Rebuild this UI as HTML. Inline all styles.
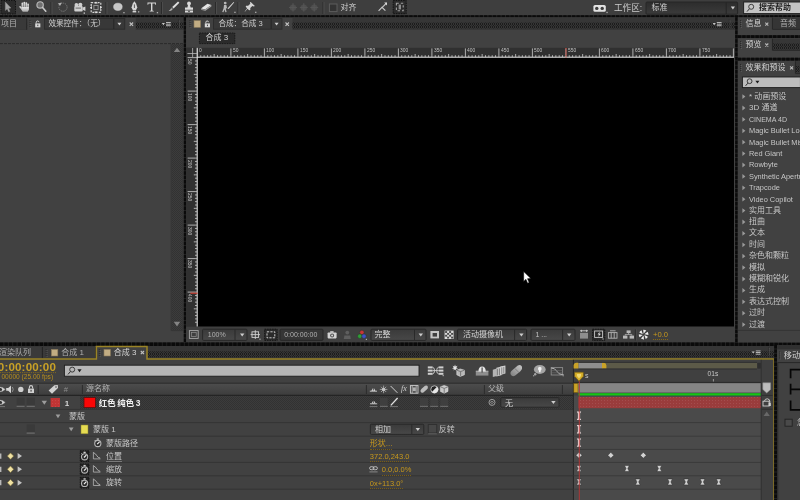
<!DOCTYPE html>
<html><head><meta charset="utf-8"><title>After Effects</title>
<style>
html,body{margin:0;padding:0;background:#424242;}
body{width:800px;height:500px;overflow:hidden;position:relative;font-family:"Liberation Sans","Noto Sans CJK SC",sans-serif;}
#ui{position:absolute;left:0;top:0;width:800px;height:500px;overflow:hidden;filter:blur(.4px);}
#tx{position:absolute;left:0;top:0;width:800px;height:500px;will-change:transform;opacity:.999;}
#bg{position:absolute;left:0;top:0;display:block;}
.t{position:absolute;white-space:nowrap;line-height:1;font-family:"Liberation Sans","Noto Sans CJK SC",sans-serif;}
.b{font-weight:bold;}
.u{border-bottom:1px dotted #7a5e16;padding-bottom:.8px;}
.ul{border-bottom:1px solid #7a7a7a;padding-bottom:0;}
</style></head><body>
<div id="ui">
<svg id="bg" width="800" height="500" viewBox="0 0 800 500"><defs><pattern id="rdots" width="3" height="3" patternUnits="userSpaceOnUse"><rect x="1" y="1" width="1" height="1" fill="#ffffff" fill-opacity="0.09"/></pattern></defs>
<pattern id="dots" width="4" height="3" patternUnits="userSpaceOnUse"><rect width="4" height="3" fill="#353535"/><path d="M0 0h1v1h-1zM2 0h1v1h-1zM1 1h1v1h-1zM0 2h1v1h-1zM2 2h1v1h-1z" fill="#1c1c1c"/><path d="M3 1h1v1h-1z" fill="#2a2a2a"/></pattern>
<pattern id="dots2" width="2" height="2" patternUnits="userSpaceOnUse"><rect width="2" height="2" fill="#3c3c3c"/><rect width="1" height="1" fill="#323232"/><rect x="1" y="1" width="1" height="1" fill="#323232"/></pattern>
<rect x="0" y="0" width="800" height="500" fill="#414141"/>
<rect x="0" y="0" width="800" height="16" fill="#3e3e3e"/>
<path d="M51 2L51 14" stroke="#2a2a2a" stroke-width="1" fill="none"/>
<path d="M52 2L52 14" stroke="#4c4c4c" stroke-width="1" fill="none"/>
<path d="M106 2L106 14" stroke="#2a2a2a" stroke-width="1" fill="none"/>
<path d="M107 2L107 14" stroke="#4c4c4c" stroke-width="1" fill="none"/>
<path d="M161.5 2L161.5 14" stroke="#2a2a2a" stroke-width="1" fill="none"/>
<path d="M162.5 2L162.5 14" stroke="#4c4c4c" stroke-width="1" fill="none"/>
<path d="M215.5 2L215.5 14" stroke="#2a2a2a" stroke-width="1" fill="none"/>
<path d="M216.5 2L216.5 14" stroke="#4c4c4c" stroke-width="1" fill="none"/>
<path d="M238 2L238 14" stroke="#2a2a2a" stroke-width="1" fill="none"/>
<path d="M239 2L239 14" stroke="#4c4c4c" stroke-width="1" fill="none"/>
<path d="M323 2L323 14" stroke="#2a2a2a" stroke-width="1" fill="none"/>
<path d="M324 2L324 14" stroke="#4c4c4c" stroke-width="1" fill="none"/>
<rect x="1" y="0.5" width="14.5" height="13.5" fill="#2b2b2b" stroke="#141414" stroke-width="1" stroke-dasharray="1.5 1"/>
<path d="M5.3 2L5.3 10.6L7.2 8.9L8.7 11.9L10 11.3L8.6 8.4L11 8Z" fill="#a2a2a2" stroke="#8a8a8a" stroke-width="0.4"/>
<linearGradient id="hg" x1="0" y1="0" x2="0" y2="1"><stop offset="0" stop-color="#e6e6e6"/><stop offset="1" stop-color="#a8a8a8"/></linearGradient>
<g transform="translate(19 1.6)" fill="url(#hg)">
<rect x="2.5" y="1" width="1.7" height="5.6" rx="0.85"/><rect x="4.5" y="0.1" width="1.7" height="6" rx="0.85"/><rect x="6.5" y="0.6" width="1.7" height="6" rx="0.85"/><rect x="8.4" y="2" width="1.5" height="5" rx="0.75"/>
<path d="M2.5 5.4H9.9V7.6Q9.6 9.4 8.6 10.2H3.8Q2.8 9.2 2.5 7.8Z"/>
<path d="M2.9 8.6L0.4 5.6Q0 4.6 0.9 4.4Q1.6 4.4 2.1 5.2L3 6.4Z"/>
</g>
<circle cx="40.1" cy="4.9" r="3.2" fill="#707070" stroke="#bcbcbc" stroke-width="1.1"/>
<path d="M42.6 7.4L45.8 11.2" stroke="#c8c8c8" stroke-width="1.6" fill="none" stroke-linecap="round"/>
<circle cx="63" cy="7.2" r="4.1" fill="none" stroke="#787878" stroke-width="1" stroke-dasharray="1.4 0.9"/>
<path d="M57.8 3.4L61.8 2.6L60.2 5.8Z" fill="#b4b4b4"/>
<g transform="translate(74 3)">
<rect x="0.3" y="3" width="8.4" height="5.4" fill="#cfcfcf" rx="1"/>
<circle cx="2.4" cy="2" r="1.9" fill="#cfcfcf"/><circle cx="6.3" cy="1.8" r="2.1" fill="#cfcfcf"/>
<path d="M8.7 4.6L11.4 3.4L11.4 8L8.7 6.8Z" fill="#cfcfcf"/>
<rect x="1.6" y="4.6" width="5.4" height="1" fill="#6a6a6a"/>
<rect x="9.6" y="9.4" width="1.4" height="1.4" fill="#bbbbbb"/>
</g>
<g transform="translate(90 1.5)">
<rect x="1.2" y="1.2" width="9.6" height="9.6" fill="none" stroke="#d4d4d4" stroke-width="1.2" stroke-dasharray="2 1.2"/>
<rect x="3.9" y="3.9" width="4.2" height="4.2" fill="#3a3a3a" stroke="#9a9a9a" stroke-width="0.9"/>
<path d="M6 0L7.6 2L4.4 2ZM6 12L7.6 10L4.4 10ZM0 6L2 4.4L2 7.6ZM12 6L10 4.4L10 7.6Z" fill="#e0e0e0"/>
</g>
<ellipse cx="117.9" cy="6.8" rx="4.3" ry="3.6" fill="#c6c6c6" stroke="#dedede" stroke-width="0.5"/>
<rect x="123.3" y="12" width="1.3" height="1.3" fill="#b0b0b0"/>
<g transform="translate(130.4 1)">
<path d="M4 0.2L5.6 2.6L6.9 6.6L5.4 9.4L2.6 9.4L1.1 6.6L2.4 2.6Z" fill="#d6d6d6"/>
<path d="M4 3.4L4 7" fill="none" stroke="#4a4a4a" stroke-width="0.9"/>
<rect x="2.2" y="10" width="3.6" height="1.4" fill="#d6d6d6"/>
<rect x="7.6" y="10.2" width="1.3" height="1.3" fill="#b0b0b0"/>
</g>
<g transform="translate(0.9 0)">
<path d="M146.6 2.6L155 2.6L155 4.8L154.3 4.8L154 3.5L151.5 3.5L151.5 10.6L152.9 10.9L152.9 11.5L148.7 11.5L148.7 10.9L150.1 10.6L150.1 3.5L147.6 3.5L147.3 4.8L146.6 4.8Z" fill="#d8d8d8"/>
</g>
<rect x="156.8" y="12" width="1.3" height="1.3" fill="#b0b0b0"/>
<path d="M178 1.4L179.4 2.8L173.6 8.4L172.2 7Z" fill="#e0e0e0"/>
<path d="M172.2 7L173.6 8.4L172.6 9.4L171.2 8Z" fill="#707070"/>
<path d="M171.2 8L172.6 9.4Q170.8 11.4 168.6 11Q170.2 10 171.2 8Z" fill="#b0b0b0"/>
<g transform="translate(185 1.5)">
<circle cx="4" cy="1.9" r="1.9" fill="#dadada"/>
<path d="M3 3.4L5 3.4L5.6 6L8 6L8 8.2L0 8.2L0 6L2.4 6Z" fill="#dadada"/>
<rect x="0" y="9" width="8" height="2" fill="#dadada"/>
<path d="M2.6 9.3L5.4 9.3L4 10.8Z" fill="#3a3a3a"/>
</g>
<path d="M201 8.4L207.4 3.8L211.4 5L205 9.6Z" fill="#e4e4e4"/>
<path d="M201 8.4L205 9.6V11L201 9.8Z" fill="#8a8a8a"/>
<path d="M205 9.6L211.4 5V6.4L205 11Z" fill="#a4a4a4"/>
<g transform="translate(221 1.5)">
<circle cx="4.2" cy="1.6" r="1.4" fill="#b8b8b8"/>
<path d="M3 3.4L5.4 3.4L6 6.4L4.8 7.2L5.6 10.6L4.4 10.8L3.6 8L2.4 10.8L1.2 10.4L2.6 6.8Z" fill="#b8b8b8"/>
<path d="M12.6 0.4L13.2 1L7.8 7.2L6.6 7.6L6.9 6.4Z" fill="#d8d8d8"/>
<rect x="13.3" y="10.2" width="1.3" height="1.3" fill="#b0b0b0"/>
</g>
<g transform="translate(244.5 1.5)">
<path d="M6.2 0.4L10.4 4.6L9.2 5L7.8 4.4L5.8 6.6L5.8 8.6L4.6 8.8L3 7.2L0.4 10.2L0.2 10L2.6 6.8L1.2 5.2L1.6 4.2L3.6 4.2L5.8 2.2L5.4 0.9Z" fill="#d4d4d4"/>
<rect x="10.6" y="10.2" width="1.3" height="1.3" fill="#b0b0b0"/>
</g>
<circle cx="293" cy="7.6" r="3.2" fill="#4e4e4e"/>
<path d="M293 3.2L293 11.6M289 7.4L297 7.4" fill="none" stroke="#585858" stroke-width="0.9"/>
<circle cx="303.8" cy="7.6" r="3.2" fill="#4e4e4e"/>
<path d="M303.8 3.2L303.8 11.6M299.8 7.4L307.8 7.4" fill="none" stroke="#585858" stroke-width="0.9"/>
<circle cx="314.2" cy="7.6" r="3.2" fill="#4e4e4e"/>
<path d="M314.2 3.2L314.2 11.6M310.2 7.4L318.2 7.4" fill="none" stroke="#585858" stroke-width="0.9"/>
<rect x="329.4" y="4" width="7.6" height="7.6" fill="#333333" stroke="#5c5c5c" stroke-width="1"/>
<path d="M378.6 10.8L382 7.4L385.4 10.6" fill="none" stroke="#c8c8c8" stroke-width="1.2"/>
<path d="M382 7.6L386.6 3" fill="none" stroke="#c8c8c8" stroke-width="1.1"/>
<path d="M384.2 2.6L387 2.6L387 5.4Z" fill="#d8d8d8"/>
<rect x="393.2" y="0.5" width="13" height="13.2" fill="#2c2c2c" stroke="#121212" stroke-width="1" stroke-dasharray="1.5 1"/>
<rect x="396.4" y="3.2" width="6.8" height="7.6" fill="none" stroke="#a0a0a0" stroke-width="1.1" stroke-dasharray="2.4 2"/>
<rect x="398.6" y="4.6" width="2.4" height="4.8" fill="#8c8c8c"/>
<rect x="593.4" y="5" width="12.4" height="6.8" fill="#e2e2e2" rx="1.6"/>
<circle cx="596.8" cy="8.4" r="1.7" fill="#3c3c3c"/><circle cx="602.2" cy="8.4" r="1.7" fill="#3c3c3c"/>
<rect x="606.4" y="11.8" width="1.3" height="1.3" fill="#b0b0b0"/>
<linearGradient id="dd" x1="0" y1="0" x2="0" y2="1"><stop offset="0" stop-color="#2c2c2c"/><stop offset="1" stop-color="#3b3b3b"/></linearGradient>
<rect x="646" y="2" width="91.6" height="12.2" fill="url(#dd)" stroke="#262626" stroke-width="1" rx="1"/>
<path d="M726.2 2.4L726.2 14" stroke="#252525" stroke-width="1" fill="none"/>
<path d="M730.8 6.6L735 6.6L732.9 9.6Z" fill="#d0d0d0"/>
<rect x="743.6" y="2" width="57" height="11.6" fill="#c4c4c4" stroke="#202020" stroke-width="1"/>
<circle cx="751.2" cy="6.8" r="2.5" fill="none" stroke="#333" stroke-width="0.9"/>
<path d="M749.4 8.8L747 11.6" stroke="#333" stroke-width="1" fill="none"/>
<rect x="0" y="15.3" width="800" height="2" fill="#202020"/>
<path d="M0 16.3L800 16.3" stroke="#0a0a0a" stroke-width="2" fill="none" stroke-dasharray="3.4 1"/>
<rect x="0" y="17.3" width="183.6" height="12.7" fill="#363636"/>
<rect x="0" y="22.5" width="183.6" height="6" fill="url(#dots)"/>
<rect x="0" y="30" width="183.6" height="312.4" fill="#414141"/>
<rect x="0" y="18.4" width="26.4" height="11.4" fill="#393939"/>
<path d="M26.6 18.4L26.6 29.8" stroke="#282828" stroke-width="1" fill="none"/>
<rect x="27.4" y="18" width="108.4" height="12.2" fill="#414141"/>
<rect x="29.4" y="20" width="1" height="1" fill="#2a2a2a"/>
<rect x="30.4" y="21" width="1" height="1" fill="#555555"/>
<rect x="29.4" y="22" width="1" height="1" fill="#2a2a2a"/>
<rect x="30.4" y="23" width="1" height="1" fill="#555555"/>
<rect x="29.4" y="24" width="1" height="1" fill="#2a2a2a"/>
<rect x="30.4" y="25" width="1" height="1" fill="#555555"/>
<rect x="29.4" y="26" width="1" height="1" fill="#2a2a2a"/>
<rect x="30.4" y="27" width="1" height="1" fill="#555555"/>
<g transform="translate(35.2 20.8) scale(0.86)">
<rect x="0" y="3" width="6" height="4.6" fill="#d8d8d8"/>
<path d="M1.2 3L1.2 1.8Q1.2 0.2 2.8 0.2Q4.2 0.2 4.4 1.6" fill="none" stroke="#d8d8d8" stroke-width="1.1"/>
<rect x="2.5" y="4.4" width="1.1" height="1.8" fill="#3a3a3a"/>
</g>
<rect x="44.4" y="18.6" width="80.4" height="10.6" fill="#383838" stroke="#2a2a2a" stroke-width="0.8"/>
<path d="M113.8 19L113.8 29" stroke="#262626" stroke-width="1" fill="none"/>
<path d="M117.4 22.8L121.4 22.8L119.4 25.6Z" fill="#cfcfcf"/>
<path d="M129.7 22.5L133.1 25.9M133.1 22.5L129.7 25.9" fill="none" stroke="#c0c0c0" stroke-width="1.1"/>
<path d="M161.8 23L165 23L163.4 25.2Z" fill="#c4c4c4"/>
<rect x="166" y="22.1" width="4.8" height="0.9" fill="#c4c4c4"/>
<rect x="166" y="23.7" width="4.8" height="0.9" fill="#c4c4c4"/>
<rect x="166" y="25.3" width="4.8" height="0.9" fill="#c4c4c4"/>
<rect x="178" y="19.6" width="1" height="1" fill="#2a2a2a"/>
<rect x="179" y="20.6" width="1" height="1" fill="#555555"/>
<rect x="178" y="21.6" width="1" height="1" fill="#2a2a2a"/>
<rect x="179" y="22.6" width="1" height="1" fill="#555555"/>
<rect x="178" y="23.6" width="1" height="1" fill="#2a2a2a"/>
<rect x="179" y="24.6" width="1" height="1" fill="#555555"/>
<rect x="178" y="25.6" width="1" height="1" fill="#2a2a2a"/>
<rect x="179" y="26.6" width="1" height="1" fill="#555555"/>
<path d="M0 43.6L183 43.6" stroke="#2b2b2b" stroke-width="1" fill="none" stroke-dasharray="3 1"/>
<rect x="171.2" y="44" width="11.6" height="286.6" fill="url(#dots2)"/>
<path d="M171.2 44L171.2 330.6" stroke="#363636" stroke-width="1" fill="none"/>
<path d="M182.8 44L182.8 330.6" stroke="#363636" stroke-width="1" fill="none"/>
<path d="M171.2 330.6L182.8 330.6" stroke="#363636" stroke-width="1" fill="none"/>
<path d="M173.8 52L180.2 52L177 47.8Z" fill="#848484"/>
<path d="M173.8 321.8L180.2 321.8L177 326.4Z" fill="#848484"/>
<rect x="183.8" y="17.3" width="2.3" height="325" fill="#202020"/>
<path d="M184.95 17.3L184.95 342.3" stroke="#0a0a0a" stroke-width="2.3" fill="none" stroke-dasharray="3.4 1"/>
<rect x="186.1" y="17.3" width="548.9" height="12.7" fill="#363636"/>
<rect x="186.1" y="22.5" width="548.9" height="6" fill="url(#dots)"/>
<rect x="186.1" y="18" width="106.4" height="12.2" fill="#414141"/>
<rect x="189.4" y="20" width="1" height="1" fill="#2a2a2a"/>
<rect x="190.4" y="21" width="1" height="1" fill="#555555"/>
<rect x="189.4" y="22" width="1" height="1" fill="#2a2a2a"/>
<rect x="190.4" y="23" width="1" height="1" fill="#555555"/>
<rect x="189.4" y="24" width="1" height="1" fill="#2a2a2a"/>
<rect x="190.4" y="25" width="1" height="1" fill="#555555"/>
<rect x="189.4" y="26" width="1" height="1" fill="#2a2a2a"/>
<rect x="190.4" y="27" width="1" height="1" fill="#555555"/>
<rect x="194" y="20.6" width="6.6" height="6.8" fill="#c2ad83" stroke="#8a7a5a" stroke-width="0.6"/>
<g transform="translate(204.8 20.8) scale(0.86)">
<rect x="0" y="3" width="6" height="4.6" fill="#d8d8d8"/>
<path d="M1.2 3L1.2 1.8Q1.2 0.2 2.8 0.2Q4.2 0.2 4.4 1.6" fill="none" stroke="#d8d8d8" stroke-width="1.1"/>
<rect x="2.5" y="4.4" width="1.1" height="1.8" fill="#3a3a3a"/>
</g>
<rect x="213.4" y="18.6" width="68.6" height="10.6" fill="#383838" stroke="#2a2a2a" stroke-width="0.8"/>
<path d="M271.2 19L271.2 29" stroke="#262626" stroke-width="1" fill="none"/>
<path d="M274.6 22.8L278.6 22.8L276.6 25.6Z" fill="#cfcfcf"/>
<path d="M285.5 22.5L288.9 25.9M288.9 22.5L285.5 25.9" fill="none" stroke="#c0c0c0" stroke-width="1.1"/>
<path d="M712.6 23L715.8 23L714.2 25.2Z" fill="#c4c4c4"/>
<rect x="716.8" y="22.1" width="4.8" height="0.9" fill="#c4c4c4"/>
<rect x="716.8" y="23.7" width="4.8" height="0.9" fill="#c4c4c4"/>
<rect x="716.8" y="25.3" width="4.8" height="0.9" fill="#c4c4c4"/>
<rect x="728.6" y="19.6" width="1" height="1" fill="#2a2a2a"/>
<rect x="729.6" y="20.6" width="1" height="1" fill="#555555"/>
<rect x="728.6" y="21.6" width="1" height="1" fill="#2a2a2a"/>
<rect x="729.6" y="22.6" width="1" height="1" fill="#555555"/>
<rect x="728.6" y="23.6" width="1" height="1" fill="#2a2a2a"/>
<rect x="729.6" y="24.6" width="1" height="1" fill="#555555"/>
<rect x="728.6" y="25.6" width="1" height="1" fill="#2a2a2a"/>
<rect x="729.6" y="26.6" width="1" height="1" fill="#555555"/>
<rect x="186.1" y="30" width="548.9" height="18" fill="#414141"/>
<rect x="199.4" y="33" width="35.4" height="10.6" fill="#2b2b2b" stroke="#161616" stroke-width="0.9" stroke-dasharray="1.5 1"/>
<rect x="186.1" y="47.8" width="547.9" height="9.8" fill="#303030"/>
<rect x="186.1" y="47.8" width="11.4" height="279" fill="#303030"/>
<rect x="197.6" y="57.6" width="536.4" height="269" fill="#000000"/>
<path d="M197 57.2L734 57.2" stroke="#e6e6e6" stroke-width="1" fill="none"/>
<path d="M197.2 47.8L197.2 326.6" stroke="#e6e6e6" stroke-width="1" fill="none"/>
<path d="M187.4 53.5L197 53.5" stroke="#b8b8b8" stroke-width="0.8" fill="none"/>
<path d="M192.6 48L192.6 57" stroke="#b8b8b8" stroke-width="0.8" fill="none"/>
<path d="M197.4 48.4V57M200.75 55.2V57M204.1 55.2V57M207.45 55.2V57M210.8 55.2V57M214.15 54V57M217.5 55.2V57M220.85 55.2V57M224.2 55.2V57M227.55 55.2V57M230.9 48.4V57M234.25 55.2V57M237.6 55.2V57M240.95 55.2V57M244.3 55.2V57M247.65 54V57M251 55.2V57M254.35 55.2V57M257.7 55.2V57M261.05 55.2V57M264.4 48.4V57M267.75 55.2V57M271.1 55.2V57M274.45 55.2V57M277.8 55.2V57M281.15 54V57M284.5 55.2V57M287.85 55.2V57M291.2 55.2V57M294.55 55.2V57M297.9 48.4V57M301.25 55.2V57M304.6 55.2V57M307.95 55.2V57M311.3 55.2V57M314.65 54V57M318 55.2V57M321.35 55.2V57M324.7 55.2V57M328.05 55.2V57M331.4 48.4V57M334.75 55.2V57M338.1 55.2V57M341.45 55.2V57M344.8 55.2V57M348.15 54V57M351.5 55.2V57M354.85 55.2V57M358.2 55.2V57M361.55 55.2V57M364.9 48.4V57M368.25 55.2V57M371.6 55.2V57M374.95 55.2V57M378.3 55.2V57M381.65 54V57M385 55.2V57M388.35 55.2V57M391.7 55.2V57M395.05 55.2V57M398.4 48.4V57M401.75 55.2V57M405.1 55.2V57M408.45 55.2V57M411.8 55.2V57M415.15 54V57M418.5 55.2V57M421.85 55.2V57M425.2 55.2V57M428.55 55.2V57M431.9 48.4V57M435.25 55.2V57M438.6 55.2V57M441.95 55.2V57M445.3 55.2V57M448.65 54V57M452 55.2V57M455.35 55.2V57M458.7 55.2V57M462.05 55.2V57M465.4 48.4V57M468.75 55.2V57M472.1 55.2V57M475.45 55.2V57M478.8 55.2V57M482.15 54V57M485.5 55.2V57M488.85 55.2V57M492.2 55.2V57M495.55 55.2V57M498.9 48.4V57M502.25 55.2V57M505.6 55.2V57M508.95 55.2V57M512.3 55.2V57M515.65 54V57M519 55.2V57M522.35 55.2V57M525.7 55.2V57M529.05 55.2V57M532.4 48.4V57M535.75 55.2V57M539.1 55.2V57M542.45 55.2V57M545.8 55.2V57M549.15 54V57M552.5 55.2V57M555.85 55.2V57M559.2 55.2V57M562.55 55.2V57M565.9 48.4V57M569.25 55.2V57M572.6 55.2V57M575.95 55.2V57M579.3 55.2V57M582.65 54V57M586 55.2V57M589.35 55.2V57M592.7 55.2V57M596.05 55.2V57M599.4 48.4V57M602.75 55.2V57M606.1 55.2V57M609.45 55.2V57M612.8 55.2V57M616.15 54V57M619.5 55.2V57M622.85 55.2V57M626.2 55.2V57M629.55 55.2V57M632.9 48.4V57M636.25 55.2V57M639.6 55.2V57M642.95 55.2V57M646.3 55.2V57M649.65 54V57M653 55.2V57M656.35 55.2V57M659.7 55.2V57M663.05 55.2V57M666.4 48.4V57M669.75 55.2V57M673.1 55.2V57M676.45 55.2V57M679.8 55.2V57M683.15 54V57M686.5 55.2V57M689.85 55.2V57M693.2 55.2V57M696.55 55.2V57M699.9 48.4V57M703.25 55.2V57M706.6 55.2V57M709.95 55.2V57M713.3 55.2V57M716.65 54V57M720 55.2V57M723.35 55.2V57M726.7 55.2V57M730.05 55.2V57M733.4 48.4V57" fill="none" stroke="#cfcfcf" stroke-width="0.8"/>
<path d="M566 48L566 57.6" stroke="#e23a2a" stroke-width="1" fill="none" stroke-dasharray="1.4 0.8"/>
<path d="M187.6 57.6H197M195 60.95H197M195 64.3H197M195 67.65H197M195 71H197M193.8 74.35H197M195 77.7H197M195 81.05H197M195 84.4H197M195 87.75H197M187.6 91.1H197M195 94.45H197M195 97.8H197M195 101.15H197M195 104.5H197M193.8 107.85H197M195 111.2H197M195 114.55H197M195 117.9H197M195 121.25H197M187.6 124.6H197M195 127.95H197M195 131.3H197M195 134.65H197M195 138H197M193.8 141.35H197M195 144.7H197M195 148.05H197M195 151.4H197M195 154.75H197M187.6 158.1H197M195 161.45H197M195 164.8H197M195 168.15H197M195 171.5H197M193.8 174.85H197M195 178.2H197M195 181.55H197M195 184.9H197M195 188.25H197M187.6 191.6H197M195 194.95H197M195 198.3H197M195 201.65H197M195 205H197M193.8 208.35H197M195 211.7H197M195 215.05H197M195 218.4H197M195 221.75H197M187.6 225.1H197M195 228.45H197M195 231.8H197M195 235.15H197M195 238.5H197M193.8 241.85H197M195 245.2H197M195 248.55H197M195 251.9H197M195 255.25H197M187.6 258.6H197M195 261.95H197M195 265.3H197M195 268.65H197M195 272H197M193.8 275.35H197M195 278.7H197M195 282.05H197M195 285.4H197M195 288.75H197M187.6 292.1H197M195 295.45H197M195 298.8H197M195 302.15H197M195 305.5H197M193.8 308.85H197M195 312.2H197M195 315.55H197M195 318.9H197M195 322.25H197" fill="none" stroke="#cfcfcf" stroke-width="0.8"/>
<path d="M190.4 293.2L197.6 293.2" stroke="#e23a2a" stroke-width="1" fill="none"/>
<rect x="186.1" y="326.8" width="548.9" height="15.6" fill="#3f3f3f"/>
<linearGradient id="dd2" x1="0" y1="0" x2="0" y2="1"><stop offset="0" stop-color="#3a3a3a"/><stop offset="1" stop-color="#484848"/></linearGradient>
<rect x="189.4" y="330.6" width="8.8" height="7.8" fill="none" stroke="#a8a8a8" stroke-width="0.9"/>
<rect x="191.4" y="332.6" width="4.8" height="3.8" fill="none" stroke="#909090" stroke-width="0.7"/>
<rect x="202.6" y="329.2" width="44.4" height="11.2" fill="url(#dd2)" stroke="#262626" stroke-width="0.9" rx="1"/>
<path d="M235 329.6L235 340" stroke="#272727" stroke-width="0.9" fill="none"/>
<path d="M240 333.5L244.4 333.5L242.2 336.5Z" fill="#cdcdcd"/>
<rect x="252" y="331.8" width="6.6" height="5.6" fill="none" stroke="#d0d0d0" stroke-width="0.9"/>
<path d="M255.3 330.2V339M250.6 334.6H260" fill="none" stroke="#d0d0d0" stroke-width="0.9"/>
<rect x="259.4" y="338.6" width="1.2" height="1.2" fill="#b0b0b0"/>
<rect x="264.6" y="329.2" width="12.6" height="11.2" fill="#2a2a2a" stroke="#141414" stroke-width="0.9" stroke-dasharray="1.5 1"/>
<rect x="267" y="331.8" width="7.8" height="6" fill="none" stroke="#c8c8c8" stroke-width="1" stroke-dasharray="2.2 1.2"/>
<rect x="280" y="329.2" width="43" height="11.2" fill="#363636" stroke="#262626" stroke-width="0.9" rx="1"/>
<g transform="translate(327.6 330.8)">
<rect x="0" y="1.6" width="9" height="6" fill="#d2d2d2" rx="0.8"/>
<rect x="2.6" y="0.4" width="3.4" height="1.6" fill="#d2d2d2"/>
<circle cx="4.5" cy="4.6" r="2" fill="#505050"/><circle cx="4.5" cy="4.6" r="1" fill="#d2d2d2"/>
</g>
<circle cx="347.3" cy="332.6" r="1.9" fill="#5e5e5e"/>
<path d="M343.8 339L344.4 335.6L350.2 335.6L350.8 339Z" fill="#5e5e5e"/>
<g stroke="#2a2a2a" stroke-width="0.4"><circle cx="361.9" cy="332.4" r="2.2" fill="#c63636"/><circle cx="359.8" cy="336.2" r="2.2" fill="#2f9e36"/><circle cx="364" cy="336.2" r="2.2" fill="#3f52c4"/></g>
<rect x="365.8" y="338.8" width="1.2" height="1.2" fill="#b0b0b0"/>
<rect x="371" y="329.2" width="55" height="11.2" fill="url(#dd2)" stroke="#262626" stroke-width="0.9" rx="1"/>
<path d="M414.5 329.6L414.5 340" stroke="#272727" stroke-width="0.9" fill="none"/>
<path d="M418.6 333.5L423 333.5L420.8 336.5Z" fill="#cdcdcd"/>
<rect x="430.4" y="331" width="8.6" height="7.4" fill="#c4c4c4"/>
<rect x="432.6" y="333" width="4.4" height="3.6" fill="#3e3e3e"/>
<rect x="444.6" y="330.6" width="9" height="8.4" fill="#d8d8d8"/>
<rect x="445.1" y="331.1" width="2" height="1.85" fill="#4a4a4a"/>
<rect x="445.1" y="334.8" width="2" height="1.85" fill="#4a4a4a"/>
<rect x="447.1" y="332.95" width="2" height="1.85" fill="#4a4a4a"/>
<rect x="447.1" y="336.65" width="2" height="1.85" fill="#4a4a4a"/>
<rect x="449.1" y="331.1" width="2" height="1.85" fill="#4a4a4a"/>
<rect x="449.1" y="334.8" width="2" height="1.85" fill="#4a4a4a"/>
<rect x="451.1" y="332.95" width="2" height="1.85" fill="#4a4a4a"/>
<rect x="451.1" y="336.65" width="2" height="1.85" fill="#4a4a4a"/>
<rect x="457.6" y="329.2" width="69" height="11.2" fill="url(#dd2)" stroke="#262626" stroke-width="0.9" rx="1"/>
<path d="M514.6 329.6L514.6 340" stroke="#272727" stroke-width="0.9" fill="none"/>
<path d="M519.2 333.5L523.6 333.5L521.4 336.5Z" fill="#cdcdcd"/>
<rect x="531" y="329.2" width="44" height="11.2" fill="url(#dd2)" stroke="#262626" stroke-width="0.9" rx="1"/>
<path d="M562.6 329.6L562.6 340" stroke="#272727" stroke-width="0.9" fill="none"/>
<path d="M567 333.5L571.4 333.5L569.2 336.5Z" fill="#cdcdcd"/>
<rect x="580" y="332.8" width="8" height="5.8" fill="#8e8e8e"/>
<path d="M580 330.8H588" fill="none" stroke="#d0d0d0" stroke-width="0.9"/>
<path d="M581.4 329.8V332M586.6 329.8V332" fill="none" stroke="#d0d0d0" stroke-width="0.8"/>
<rect x="592.6" y="329.2" width="12.2" height="11.2" fill="#2a2a2a" stroke="#141414" stroke-width="0.9" stroke-dasharray="1.5 1"/>
<rect x="594.6" y="331" width="8" height="6.4" fill="none" stroke="#c8c8c8" stroke-width="0.9"/>
<path d="M599.6 331.8L597.6 334.6L599.2 334.6L598 337L601 333.8L599.4 333.8Z" fill="#e8e8e8"/>
<rect x="602.4" y="338.4" width="1.2" height="1.2" fill="#b0b0b0"/>
<rect x="608.4" y="332.6" width="8.6" height="5.6" fill="none" stroke="#b4b4b4" stroke-width="0.9"/>
<path d="M611.2 332.6V338.2M614.2 332.6V338.2M610 330.8H615.6" fill="none" stroke="#b4b4b4" stroke-width="0.9"/>
<rect x="626.6" y="330.4" width="4" height="2.6" fill="#b8b8b8"/>
<rect x="623" y="335.6" width="4.4" height="3" fill="#b8b8b8"/>
<rect x="629.6" y="335.6" width="4.4" height="3" fill="#b8b8b8"/>
<path d="M628.6 333V334.4M625.2 335.6V334.4H631.8V335.6" fill="none" stroke="#b8b8b8" stroke-width="0.8"/>
<path d="M635.4 329.4L635.4 340.4" stroke="#2a2a2a" stroke-width="1" fill="none"/>
<path d="M636.4 329.4L636.4 340.4" stroke="#4a4a4a" stroke-width="1" fill="none"/>
<g transform="translate(643.6 334.6)">
<circle r="4.6" fill="#3a3a3a"/>
<path d="M0 -0.9L2.7 -4Q1.2 -5 -0.4 -4.8Z" fill="#ececec" transform="rotate(0)"/>
<path d="M0 -0.9L2.7 -4Q1.2 -5 -0.4 -4.8Z" fill="#ececec" transform="rotate(60)"/>
<path d="M0 -0.9L2.7 -4Q1.2 -5 -0.4 -4.8Z" fill="#ececec" transform="rotate(120)"/>
<path d="M0 -0.9L2.7 -4Q1.2 -5 -0.4 -4.8Z" fill="#ececec" transform="rotate(180)"/>
<path d="M0 -0.9L2.7 -4Q1.2 -5 -0.4 -4.8Z" fill="#ececec" transform="rotate(240)"/>
<path d="M0 -0.9L2.7 -4Q1.2 -5 -0.4 -4.8Z" fill="#ececec" transform="rotate(300)"/>
</g>
<rect x="735.2" y="17.3" width="2.6" height="325" fill="#202020"/>
<path d="M736.5 17.3L736.5 342.3" stroke="#0a0a0a" stroke-width="2.6" fill="none" stroke-dasharray="3.4 1"/>
<rect x="0" y="342.4" width="800" height="3.6" fill="#202020"/>
<path d="M0 344.2L800 344.2" stroke="#0a0a0a" stroke-width="3.6" fill="none" stroke-dasharray="3.4 1"/>
<rect x="737.8" y="17.4" width="62.2" height="18" fill="#414141"/>
<rect x="772.4" y="17.6" width="27.6" height="11.6" fill="#353535"/>
<path d="M772.4 17.6L772.4 29.2" stroke="#262626" stroke-width="1" fill="none"/>
<path d="M772.4 29.4L800 29.4" stroke="#2a2a2a" stroke-width="1" fill="none"/>
<rect x="740" y="20" width="1" height="1" fill="#2a2a2a"/>
<rect x="741" y="21" width="1" height="1" fill="#555555"/>
<rect x="740" y="22" width="1" height="1" fill="#2a2a2a"/>
<rect x="741" y="23" width="1" height="1" fill="#555555"/>
<rect x="740" y="24" width="1" height="1" fill="#2a2a2a"/>
<rect x="741" y="25" width="1" height="1" fill="#555555"/>
<rect x="740" y="26" width="1" height="1" fill="#2a2a2a"/>
<rect x="741" y="27" width="1" height="1" fill="#555555"/>
<path d="M765.3 22.7L768.3 25.7M768.3 22.7L765.3 25.7" fill="none" stroke="#b8b8b8" stroke-width="1.1"/>
<rect x="737.8" y="35.2" width="62.2" height="3" fill="#202020"/>
<path d="M737.8 36.7L800 36.7" stroke="#0a0a0a" stroke-width="3" fill="none" stroke-dasharray="3.4 1"/>
<rect x="737.8" y="38.2" width="62.2" height="19.6" fill="#414141"/>
<rect x="772.4" y="38.8" width="27.6" height="11.4" fill="#363636"/>
<rect x="772.4" y="43.4" width="27.6" height="6" fill="url(#dots)"/>
<path d="M772.4 38.6L772.4 50.2" stroke="#262626" stroke-width="1" fill="none"/>
<path d="M772.4 50.4L800 50.4" stroke="#2a2a2a" stroke-width="1" fill="none"/>
<rect x="740" y="41" width="1" height="1" fill="#2a2a2a"/>
<rect x="741" y="42" width="1" height="1" fill="#555555"/>
<rect x="740" y="43" width="1" height="1" fill="#2a2a2a"/>
<rect x="741" y="44" width="1" height="1" fill="#555555"/>
<rect x="740" y="45" width="1" height="1" fill="#2a2a2a"/>
<rect x="741" y="46" width="1" height="1" fill="#555555"/>
<rect x="740" y="47" width="1" height="1" fill="#2a2a2a"/>
<rect x="741" y="48" width="1" height="1" fill="#555555"/>
<path d="M765.3 43.5L768.3 46.5M768.3 43.5L765.3 46.5" fill="none" stroke="#b8b8b8" stroke-width="1.1"/>
<rect x="737.8" y="57.8" width="62.2" height="3" fill="#202020"/>
<path d="M737.8 59.3L800 59.3" stroke="#0a0a0a" stroke-width="3" fill="none" stroke-dasharray="3.4 1"/>
<rect x="737.8" y="60.8" width="62.2" height="281.6" fill="#414141"/>
<rect x="795.4" y="61.2" width="5" height="12.2" fill="#363636"/>
<rect x="795.4" y="66" width="5" height="6" fill="url(#dots)"/>
<path d="M795.4 61.2L795.4 73.4" stroke="#262626" stroke-width="1" fill="none"/>
<path d="M795.4 73.6L800 73.6" stroke="#2a2a2a" stroke-width="1" fill="none"/>
<rect x="740" y="64" width="1" height="1" fill="#2a2a2a"/>
<rect x="741" y="65" width="1" height="1" fill="#555555"/>
<rect x="740" y="66" width="1" height="1" fill="#2a2a2a"/>
<rect x="741" y="67" width="1" height="1" fill="#555555"/>
<rect x="740" y="68" width="1" height="1" fill="#2a2a2a"/>
<rect x="741" y="69" width="1" height="1" fill="#555555"/>
<rect x="740" y="70" width="1" height="1" fill="#2a2a2a"/>
<rect x="741" y="71" width="1" height="1" fill="#555555"/>
<path d="M790.1 66.3L793.1 69.3M793.1 66.3L790.1 69.3" fill="none" stroke="#b8b8b8" stroke-width="1.1"/>
<rect x="742.4" y="77" width="58" height="10.6" fill="#bdbdbd" stroke="#1c1c1c" stroke-width="0.9"/>
<circle cx="749.6" cy="81.2" r="2.4" fill="none" stroke="#2e2e2e" stroke-width="0.9"/>
<path d="M747.8 83.2L745.6 85.8" stroke="#2e2e2e" stroke-width="1" fill="none"/>
<path d="M755.4 80.8L759.4 80.8L757.4 83.6Z" fill="#1c1c1c"/>
<path d="M742.4 94.2L745.4 96.6L742.4 99Z" fill="#9a9a9a"/>
<path d="M742.4 105.6L745.4 108L742.4 110.4Z" fill="#9a9a9a"/>
<path d="M742.4 117L745.4 119.4L742.4 121.8Z" fill="#9a9a9a"/>
<path d="M742.4 128.4L745.4 130.8L742.4 133.2Z" fill="#9a9a9a"/>
<path d="M742.4 139.8L745.4 142.2L742.4 144.6Z" fill="#9a9a9a"/>
<path d="M742.4 151.2L745.4 153.6L742.4 156Z" fill="#9a9a9a"/>
<path d="M742.4 162.6L745.4 165L742.4 167.4Z" fill="#9a9a9a"/>
<path d="M742.4 174L745.4 176.4L742.4 178.8Z" fill="#9a9a9a"/>
<path d="M742.4 185.4L745.4 187.8L742.4 190.2Z" fill="#9a9a9a"/>
<path d="M742.4 196.8L745.4 199.2L742.4 201.6Z" fill="#9a9a9a"/>
<path d="M742.4 208.2L745.4 210.6L742.4 213Z" fill="#9a9a9a"/>
<path d="M742.4 219.6L745.4 222L742.4 224.4Z" fill="#9a9a9a"/>
<path d="M742.4 231L745.4 233.4L742.4 235.8Z" fill="#9a9a9a"/>
<path d="M742.4 242.4L745.4 244.8L742.4 247.2Z" fill="#9a9a9a"/>
<path d="M742.4 253.8L745.4 256.2L742.4 258.6Z" fill="#9a9a9a"/>
<path d="M742.4 265.2L745.4 267.6L742.4 270Z" fill="#9a9a9a"/>
<path d="M742.4 276.6L745.4 279L742.4 281.4Z" fill="#9a9a9a"/>
<path d="M742.4 288L745.4 290.4L742.4 292.8Z" fill="#9a9a9a"/>
<path d="M742.4 299.4L745.4 301.8L742.4 304.2Z" fill="#9a9a9a"/>
<path d="M742.4 310.8L745.4 313.2L742.4 315.6Z" fill="#9a9a9a"/>
<path d="M742.4 322.2L745.4 324.6L742.4 327Z" fill="#9a9a9a"/>
<path d="M737.8 330.4L800 330.4" stroke="#343434" stroke-width="1" fill="none"/>
<rect x="0" y="346" width="774.4" height="13" fill="#363636"/>
<rect x="0" y="351.3" width="774.4" height="6" fill="url(#dots)"/>
<rect x="0" y="347" width="42" height="11.4" fill="#3a3a3a"/>
<path d="M42.4 347L42.4 358.4" stroke="#242424" stroke-width="1" fill="none"/>
<rect x="43" y="347" width="52.6" height="11.4" fill="#3a3a3a"/>
<path d="M95.6 347L95.6 358.4" stroke="#242424" stroke-width="1" fill="none"/>
<rect x="45.6" y="349" width="1" height="1" fill="#2a2a2a"/>
<rect x="46.6" y="350" width="1" height="1" fill="#555555"/>
<rect x="45.6" y="351" width="1" height="1" fill="#2a2a2a"/>
<rect x="46.6" y="352" width="1" height="1" fill="#555555"/>
<rect x="45.6" y="353" width="1" height="1" fill="#2a2a2a"/>
<rect x="46.6" y="354" width="1" height="1" fill="#555555"/>
<rect x="45.6" y="355" width="1" height="1" fill="#2a2a2a"/>
<rect x="46.6" y="356" width="1" height="1" fill="#555555"/>
<rect x="51.4" y="349.4" width="6.4" height="6.6" fill="#c2ad83" stroke="#8a7a5a" stroke-width="0.6"/>
<rect x="96.6" y="346.4" width="50.4" height="12.8" fill="#414141"/>
<rect x="98.8" y="349" width="1" height="1" fill="#2a2a2a"/>
<rect x="99.8" y="350" width="1" height="1" fill="#555555"/>
<rect x="98.8" y="351" width="1" height="1" fill="#2a2a2a"/>
<rect x="99.8" y="352" width="1" height="1" fill="#555555"/>
<rect x="98.8" y="353" width="1" height="1" fill="#2a2a2a"/>
<rect x="99.8" y="354" width="1" height="1" fill="#555555"/>
<rect x="98.8" y="355" width="1" height="1" fill="#2a2a2a"/>
<rect x="99.8" y="356" width="1" height="1" fill="#555555"/>
<rect x="104" y="349.4" width="6.4" height="6.6" fill="#c2ad83" stroke="#8a7a5a" stroke-width="0.6"/>
<path d="M140.8 351L144 354.2M144 351L140.8 354.2" fill="none" stroke="#c0c0c0" stroke-width="1.1"/>
<path d="M751.6 351.4L754.8 351.4L753.2 353.6Z" fill="#c4c4c4"/>
<rect x="755.8" y="350.5" width="4.8" height="0.9" fill="#c4c4c4"/>
<rect x="755.8" y="352.1" width="4.8" height="0.9" fill="#c4c4c4"/>
<rect x="755.8" y="353.7" width="4.8" height="0.9" fill="#c4c4c4"/>
<rect x="768" y="347.4" width="1" height="1" fill="#2a2a2a"/>
<rect x="769" y="348.4" width="1" height="1" fill="#555555"/>
<rect x="768" y="349.4" width="1" height="1" fill="#2a2a2a"/>
<rect x="769" y="350.4" width="1" height="1" fill="#555555"/>
<rect x="768" y="351.4" width="1" height="1" fill="#2a2a2a"/>
<rect x="769" y="352.4" width="1" height="1" fill="#555555"/>
<rect x="768" y="353.4" width="1" height="1" fill="#2a2a2a"/>
<rect x="769" y="354.4" width="1" height="1" fill="#555555"/>
<rect x="0" y="359.4" width="773.4" height="141" fill="#414141"/>
<path d="M0 359.1H96.4V346.4H147V359.1H773.9" fill="none" stroke="#9a8426" stroke-width="1.5"/>
<path d="M773.4 359L773.4 500" stroke="#907a22" stroke-width="1.1" fill="none"/>
<path d="M0 372.6L56 372.6" stroke="#8a6e1a" stroke-width="0.9" fill="none" stroke-dasharray="1.2 1"/>
<rect x="64.4" y="365.2" width="354.6" height="11" fill="#b6b6b6" stroke="#1e1e1e" stroke-width="0.9"/>
<circle cx="72.2" cy="369.6" r="2.5" fill="none" stroke="#2e2e2e" stroke-width="0.9"/>
<path d="M70.4 371.6L68 374.4" stroke="#2e2e2e" stroke-width="1" fill="none"/>
<path d="M77.4 369.2L81.6 369.2L79.5 372.2Z" fill="#1c1c1c"/>
<g transform="translate(427.8 366.2)">
<rect x="0" y="0.2" width="4.8" height="2" fill="#cfcfcf"/>
<rect x="10.8" y="0.2" width="4.8" height="2" fill="#cfcfcf"/>
<rect x="0" y="3.4" width="4.8" height="2" fill="#cfcfcf"/>
<rect x="10.8" y="3.4" width="4.8" height="2" fill="#cfcfcf"/>
<rect x="0" y="6.6" width="4.8" height="2" fill="#cfcfcf"/>
<rect x="10.8" y="6.6" width="4.8" height="2" fill="#cfcfcf"/>
<path d="M4.8 1.2Q6.6 1.2 6.8 4.4Q6.6 7.6 4.8 7.6M10.8 1.2Q9 1.2 8.8 4.4Q9 7.6 10.8 7.6M4.8 4.4H10.8" fill="none" stroke="#cfcfcf" stroke-width="0.9"/>
<rect x="14.8" y="8.8" width="1.2" height="1.2" fill="#b0b0b0"/>
</g>
<g transform="translate(452 364.6)">
<path d="M3 0L3.7 1.9L5.6 1.2L4.4 2.9L6 4L4 4.2L4.2 6.2L3 4.6L1.6 6L1.9 4.1L0 3.8L1.7 2.8L0.6 1.2L2.4 1.8Z" fill="#e6e6e6"/>
<path d="M8.2 4.4L12.4 5.6L12.4 10.2L8.2 11.8L4.8 10.2L4.8 5.6Z" fill="#b8b8b8" stroke="#e0e0e0" stroke-width="0.6"/>
<path d="M4.8 5.6L8.6 7L12.4 5.6M8.6 7V11.6" fill="none" stroke="#5a5a5a" stroke-width="0.7"/>
</g>
<g transform="translate(475.8 366)">
<rect x="0" y="5.2" width="12.6" height="4.4" fill="#8e8e8e"/>
<path d="M0 5.2L12.6 5.2" stroke="#c8c8c8" stroke-width="0.8" fill="none"/>
<path d="M2.6 5.4Q2.8 0.4 6.3 0.4Q9.8 0.4 10 5.4Z" fill="#e4e4e4"/>
<path d="M6.3 1.6V6.4" fill="none" stroke="#3a3a3a" stroke-width="1.1"/>
</g>
<g transform="translate(492.8 365.4)">
<path d="M0 4.4L4 3.2V10.6L0 11.6Z" fill="#b4b4b4"/>
<path d="M3.6 2.4L8.6 1V9.8L3.6 11Z" fill="#c6c6c6"/>
<path d="M7.6 1L12.6 0V8.2L7.6 9.6Z" fill="#d6d6d6"/>
<path d="M4.6 3.4V10M6.6 3V9.6M9 2V8.8M11 1.4V8.2" fill="none" stroke="#5a5a5a" stroke-width="0.7"/>
</g>
<linearGradient id="pill" x1="1" y1="0" x2="0" y2="1"><stop offset="0" stop-color="#cacaca"/><stop offset="1" stop-color="#7c7c7c"/></linearGradient>
<g transform="translate(510.2 365)">
<path d="M7.6 0.6Q10.6 -0.8 11.8 1.8Q12.6 4.4 10.2 6.2L5 10.6Q2 12.2 0.5 9.6Q-0.5 7 2 5.2Z" fill="url(#pill)"/>
<path d="M4.6 3.4L8.8 7.6" fill="none" stroke="#6a6a6a" stroke-width="0.7"/>
</g>
<g transform="translate(533 364.6)">
<ellipse cx="6.8" cy="4.8" rx="5.9" ry="4.5" fill="#a4a4a4"/>
<circle cx="2.2" cy="9.6" r="1.2" fill="#a4a4a4"/><circle cx="0.7" cy="11.2" r="0.7" fill="#a4a4a4"/>
<path d="M6.8 2.2Q9 2.4 8.6 4.6L7.6 6.2V7.6H6V6.2L5 4.6Q4.6 2.4 6.8 2.2Z" fill="#f4f4f4"/>
</g>
<g transform="translate(550.6 366)">
<rect x="0.6" y="1.6" width="11.4" height="7.4" fill="none" stroke="#8c8c8c" stroke-width="0.9"/>
<path d="M0.6 2Q4.4 2 6.2 5.2Q8 8.6 12 8.6" fill="none" stroke="#c4c4c4" stroke-width="0.9"/>
<path d="M0.6 4.6H12M0.6 6.8H12" fill="none" stroke="#6e6e6e" stroke-width="0.6"/>
<path d="M12.6 8V10.4" fill="none" stroke="#b0b0b0" stroke-width="0.8"/>
</g>
<linearGradient id="hdr" x1="0" y1="0" x2="0" y2="1"><stop offset="0" stop-color="#4d4d4d"/><stop offset="1" stop-color="#3d3d3d"/></linearGradient>
<rect x="0" y="383.4" width="573.4" height="11.6" fill="url(#hdr)"/>
<path d="M0 383.2L573.4 383.2" stroke="#2c2c2c" stroke-width="1" fill="none"/>
<path d="M0 395.4L573.4 395.4" stroke="#242424" stroke-width="1.2" fill="none"/>
<path d="M-5.2 389.4Q0 384.8 5.2 389.4Q0 394 -5.2 389.4Z" fill="#d8d8d8" stroke="#9a9a9a" stroke-width="0.5"/>
<circle cx="0.6" cy="389.4" r="1.5" fill="#333"/>
<path d="M6.2 388H8.2L11 385.6V393.2L8.2 390.8H6.2Z" fill="#d4d4d4"/>
<path d="M12.4 387Q14 389.4 12.4 391.8" fill="none" stroke="#9a9a9a" stroke-width="0.9"/>
<circle cx="20.8" cy="389.4" r="2.7" fill="#d0d0d0"/>
<rect x="28" y="388.6" width="6" height="4.4" fill="#d0d0d0"/>
<path d="M29.4 388.6V387.2Q29.4 385.6 31 385.6Q32.6 385.6 32.6 387.2V388.6" fill="none" stroke="#d0d0d0" stroke-width="1.1"/>
<rect x="30.5" y="389.8" width="1.1" height="1.8" fill="#3a3a3a"/>
<path d="M38.2 385L38.2 394" stroke="#2c2c2c" stroke-width="1" fill="none"/>
<path d="M48.6 390.4L54.4 385.2L57.8 385L58 388L52 393.8Z" fill="#d0d0d0"/>
<circle cx="56" cy="387" r="0.8" fill="#444"/>
<path d="M82.4 385L82.4 394" stroke="#2c2c2c" stroke-width="1" fill="none"/>
<path d="M366.4 385L366.4 394" stroke="#2c2c2c" stroke-width="1" fill="none"/>
<path d="M369.8 391.2H377" fill="none" stroke="#d0d0d0" stroke-width="0.9"/>
<path d="M371.4 391Q373.4 385.2 375.4 391Z" fill="#d0d0d0"/>
<path d="M373.4 387.8V390.4" fill="none" stroke="#3c3c3c" stroke-width="0.8"/>
<circle cx="383.6" cy="389.4" r="1.7" fill="#d0d0d0"/>
<path d="M383.6 385.6V393.2M379.8 389.4H387.4M381 386.8L386.2 392M386.2 386.8L381 392" fill="none" stroke="#c0c0c0" stroke-width="0.7"/>
<path d="M390.6 386L397.4 392.8" fill="none" stroke="#d0d0d0" stroke-width="1"/>
<rect x="410.4" y="385.6" width="7.6" height="7.6" fill="none" stroke="#d0d0d0" stroke-width="0.9"/>
<path d="M412.2 385.6V393.2M416.2 385.6V393.2" fill="none" stroke="#d0d0d0" stroke-width="0.7"/>
<rect x="412.8" y="387.4" width="3" height="3.8" fill="#b0b0b0"/>
<g transform="translate(420.2 385.2)">
<path d="M4.8 0.6Q6.8 -0.4 7.6 1.2Q8.2 3 6.6 4.2L3.2 7.2Q1.4 8.2 0.4 6.6Q-0.2 5 1.4 3.6Z" fill="#bcbcbc"/>
</g>
<circle cx="434.4" cy="389.4" r="3.6" fill="#222" stroke="#d0d0d0" stroke-width="0.8"/>
<path d="M431.8 392L437 386.8A3.6 3.6 0 0 1 431.8 392Z" fill="#e6e6e6"/>
<path d="M444.2 385.4L448 386.8V391.4L444.2 393.2L440.4 391.4V386.8Z" fill="#c8c8c8" stroke="#e4e4e4" stroke-width="0.5"/>
<path d="M440.4 386.8L444.2 388.4L448 386.8M444.2 388.4V393" fill="none" stroke="#5c5c5c" stroke-width="0.7"/>
<path d="M484.4 385L484.4 394" stroke="#2c2c2c" stroke-width="1" fill="none"/>
<path d="M562.4 385L562.4 394" stroke="#2c2c2c" stroke-width="1" fill="none"/>
<path d="M0 409.4L573.4 409.4" stroke="#343434" stroke-width="1" fill="none"/>
<path d="M0 422.6L573.4 422.6" stroke="#343434" stroke-width="1" fill="none"/>
<path d="M0 436.2L573.4 436.2" stroke="#343434" stroke-width="1" fill="none"/>
<path d="M0 449.4L573.4 449.4" stroke="#343434" stroke-width="1" fill="none"/>
<path d="M0 462.4L573.4 462.4" stroke="#343434" stroke-width="1" fill="none"/>
<path d="M0 475.8L573.4 475.8" stroke="#343434" stroke-width="1" fill="none"/>
<path d="M0 489.2L573.4 489.2" stroke="#343434" stroke-width="1" fill="none"/>
<rect x="80" y="396.2" width="493.4" height="12.8" fill="url(#dots2)"/>
<path d="M-5.2 402.4Q0 397.8 5.2 402.4Q0 407 -5.2 402.4Z" fill="#d4d4d4" stroke="#9a9a9a" stroke-width="0.5"/>
<circle cx="0.6" cy="402.4" r="1.5" fill="#333"/>
<path d="M0 406.6L5 406.6" stroke="#7c7c7c" stroke-width="0.9" fill="none"/>
<rect x="16.6" y="397.6" width="8" height="7.8" fill="#3a3a3a"/>
<path d="M16.6 406.3L24.6 406.3" stroke="#7c7c7c" stroke-width="0.9" fill="none"/>
<rect x="26.6" y="397.6" width="8.2" height="7.8" fill="#3a3a3a"/>
<path d="M26.6 406.3L34.8 406.3" stroke="#7c7c7c" stroke-width="0.9" fill="none"/>
<path d="M41.6 400.8L47 400.8L44.3 404.8Z" fill="#9c9c9c"/>
<rect x="50.6" y="398" width="9.4" height="9" fill="#c03434"/>
<rect x="50.6" y="398" width="9.4" height="9" fill="url(#rdots)"/>
<rect x="84" y="397.6" width="11.4" height="10" fill="#fa0606" stroke="#5a1010" stroke-width="0.8"/>
<path d="M370 403.8H377.2" fill="none" stroke="#d0d0d0" stroke-width="0.9"/>
<path d="M371.6 403.6Q373.6 397.8 375.6 403.6Z" fill="#d0d0d0"/>
<path d="M373.6 400.4V403" fill="none" stroke="#3c3c3c" stroke-width="0.8"/>
<path d="M369.6 406.6L377.4 406.6" stroke="#7c7c7c" stroke-width="0.9" fill="none"/>
<rect x="380" y="397.8" width="7.8" height="7.6" fill="#3f3f3f"/>
<path d="M380 406.3L387.8 406.3" stroke="#7c7c7c" stroke-width="0.9" fill="none"/>
<path d="M390.8 405.4L397.6 398" fill="none" stroke="#e2e2e2" stroke-width="1.3"/>
<path d="M390 406.6L398 406.6" stroke="#7c7c7c" stroke-width="0.9" fill="none"/>
<rect x="420" y="397.8" width="8" height="7.6" fill="#3f3f3f"/>
<path d="M420 406.3L428 406.3" stroke="#7c7c7c" stroke-width="0.9" fill="none"/>
<rect x="430.2" y="397.8" width="8" height="7.6" fill="#3f3f3f"/>
<path d="M430.2 406.3L438.2 406.3" stroke="#7c7c7c" stroke-width="0.9" fill="none"/>
<rect x="440.2" y="397.8" width="8" height="7.6" fill="#3f3f3f"/>
<path d="M440.2 406.3L448.2 406.3" stroke="#7c7c7c" stroke-width="0.9" fill="none"/>
<circle cx="492" cy="402.4" r="3" fill="none" stroke="#a8a8a8" stroke-width="0.9"/>
<path d="M490.4 402.4Q492 400 493.6 402.4Q492 404.8 490.4 402.4" fill="none" stroke="#a8a8a8" stroke-width="0.7"/>
<rect x="500.8" y="397.6" width="58.2" height="9.6" fill="url(#dd2)" stroke="#262626" stroke-width="0.9" rx="1"/>
<path d="M551.2 401.1L555.6 401.1L553.4 404.1Z" fill="#cdcdcd"/>
<path d="M55.6 414.6L60.4 414.6L58 418.2Z" fill="#9c9c9c"/>
<rect x="26.6" y="424.4" width="8.2" height="7.8" fill="#3a3a3a"/>
<path d="M26.6 433.1L34.8 433.1" stroke="#7c7c7c" stroke-width="0.9" fill="none"/>
<path d="M68.8 427.6L73.6 427.6L71.2 431.2Z" fill="#9c9c9c"/>
<rect x="81" y="425" width="7" height="8.8" fill="#e6dc52" stroke="#8a842e" stroke-width="0.5"/>
<rect x="370.4" y="424.2" width="53.4" height="10.2" fill="url(#dd2)" stroke="#262626" stroke-width="0.9" rx="1"/>
<path d="M411.8 424.6L411.8 434" stroke="#272727" stroke-width="0.9" fill="none"/>
<path d="M415.6 428L420 428L417.8 431Z" fill="#cdcdcd"/>
<rect x="428.2" y="424.6" width="8.6" height="8.4" fill="#474747" stroke="#2c2c2c" stroke-width="0.8"/>
<path d="M428.2 433.8L436.8 433.8" stroke="#6a6a6a" stroke-width="0.8" fill="none"/>
<circle cx="97.8" cy="443.5" r="3.1" fill="#2c2c2c" stroke="#b4b4b4" stroke-width="1.1"/>
<rect x="96.7" y="438.4" width="2.2" height="1.3" fill="#c4c4c4"/>
<path d="M97.2 444.2L99.5 441.8" fill="none" stroke="#f2f2f2" stroke-width="1.2"/>
<path d="M94.6 440L95.6 441" fill="none" stroke="#c4c4c4" stroke-width="0.9"/>
<path d="M0 453.5L1.4 453.5L1.4 458.7L0 458.7Z" fill="#b8b8b8"/>
<path d="M10.5 452.9L13.6 456.1L10.5 459.3L7.4 456.1Z" fill="#f0e2a4" stroke="#8a7a3a" stroke-width="0.5"/>
<path d="M17.6 453.1L22 456.1L17.6 459.1Z" fill="#c2c2c2"/>
<rect x="80.2" y="450.7" width="8.8" height="10.8" fill="#222222" stroke="#101010" stroke-width="0.8" stroke-dasharray="1.4 1"/>
<circle cx="84.6" cy="456.8" r="3.1" fill="#2c2c2c" stroke="#b4b4b4" stroke-width="1.1"/>
<rect x="83.5" y="451.7" width="2.2" height="1.3" fill="#d0d0d0"/>
<path d="M84 457.5L86.3 455.1" fill="none" stroke="#f2f2f2" stroke-width="1.2"/>
<path d="M81.4 453.3L82.4 454.3" fill="none" stroke="#d0d0d0" stroke-width="0.9"/>
<path d="M93.4 452.1V458.9H100.4" fill="none" stroke="#b4b4b4" stroke-width="0.8"/>
<path d="M93.6 452.7Q95.6 453.5 96.8 455.7Q98 457.9 100.2 458.1" fill="none" stroke="#c4c4c4" stroke-width="0.8"/>
<path d="M0 466.7L1.4 466.7L1.4 471.9L0 471.9Z" fill="#b8b8b8"/>
<path d="M10.5 466.1L13.6 469.3L10.5 472.5L7.4 469.3Z" fill="#f0e2a4" stroke="#8a7a3a" stroke-width="0.5"/>
<path d="M17.6 466.3L22 469.3L17.6 472.3Z" fill="#c2c2c2"/>
<rect x="80.2" y="463.9" width="8.8" height="10.8" fill="#222222" stroke="#101010" stroke-width="0.8" stroke-dasharray="1.4 1"/>
<circle cx="84.6" cy="470" r="3.1" fill="#2c2c2c" stroke="#b4b4b4" stroke-width="1.1"/>
<rect x="83.5" y="464.9" width="2.2" height="1.3" fill="#d0d0d0"/>
<path d="M84 470.7L86.3 468.3" fill="none" stroke="#f2f2f2" stroke-width="1.2"/>
<path d="M81.4 466.5L82.4 467.5" fill="none" stroke="#d0d0d0" stroke-width="0.9"/>
<path d="M93.4 465.3V472.1H100.4" fill="none" stroke="#b4b4b4" stroke-width="0.8"/>
<path d="M93.6 465.9Q95.6 466.7 96.8 468.9Q98 471.1 100.2 471.3" fill="none" stroke="#c4c4c4" stroke-width="0.8"/>
<path d="M0 480.1L1.4 480.1L1.4 485.3L0 485.3Z" fill="#b8b8b8"/>
<path d="M10.5 479.5L13.6 482.7L10.5 485.9L7.4 482.7Z" fill="#f0e2a4" stroke="#8a7a3a" stroke-width="0.5"/>
<path d="M17.6 479.7L22 482.7L17.6 485.7Z" fill="#c2c2c2"/>
<rect x="80.2" y="477.3" width="8.8" height="10.8" fill="#222222" stroke="#101010" stroke-width="0.8" stroke-dasharray="1.4 1"/>
<circle cx="84.6" cy="483.4" r="3.1" fill="#2c2c2c" stroke="#b4b4b4" stroke-width="1.1"/>
<rect x="83.5" y="478.3" width="2.2" height="1.3" fill="#d0d0d0"/>
<path d="M84 484.1L86.3 481.7" fill="none" stroke="#f2f2f2" stroke-width="1.2"/>
<path d="M81.4 479.9L82.4 480.9" fill="none" stroke="#d0d0d0" stroke-width="0.9"/>
<path d="M93.4 478.7V485.5H100.4" fill="none" stroke="#b4b4b4" stroke-width="0.8"/>
<path d="M93.6 479.3Q95.6 480.1 96.8 482.3Q98 484.5 100.2 484.7" fill="none" stroke="#c4c4c4" stroke-width="0.8"/>
<rect x="369.6" y="466.7" width="4.4" height="3" rx="1.5" fill="none" stroke="#d0d0d0" stroke-width="0.8"/>
<rect x="373" y="466.7" width="4.4" height="3" rx="1.5" fill="none" stroke="#d0d0d0" stroke-width="0.8"/>
<path d="M369.4 471.9L377.6 471.9" stroke="#9a9a9a" stroke-width="0.8" fill="none"/>
<rect x="573.4" y="359.8" width="187.8" height="23.4" fill="#404040"/>
<rect x="573.4" y="395.6" width="187.8" height="104.4" fill="#4a4a4a"/>
<path d="M573.4 359.8L573.4 500" stroke="#262626" stroke-width="1" fill="none"/>
<rect x="578.4" y="362.8" width="179" height="5.8" fill="#5c5a48"/>
<rect x="578.4" y="362.8" width="24" height="5.8" fill="#8e8e8e"/>
<path d="M573.6 368.6V365.4Q573.8 362.8 576.4 362.8H578.4V368.6Z" fill="#c9a227"/>
<path d="M602 362.8H604Q606.2 362.8 606.4 365.4V368.6H602Z" fill="#c9a227"/>
<rect x="757.2" y="362.8" width="3.6" height="5.8" fill="#2e2e2e"/>
<path d="M578.4 362.4L757 362.4" stroke="#2c2c2c" stroke-width="0.8" fill="none"/>
<path d="M578.4 369L757 369" stroke="#2c2c2c" stroke-width="0.8" fill="none"/>
<path d="M713.4 379L713.4 381.6" stroke="#b0b0b0" stroke-width="0.8" fill="none"/>
<path d="M573.4 382.4L761.2 382.4" stroke="#2a2a2a" stroke-width="1" fill="none"/>
<rect x="578" y="383.2" width="183.2" height="9.4" fill="#858585"/>
<rect x="573.8" y="383.4" width="4.2" height="9.2" fill="#c9a227" stroke="#6a5410" stroke-width="0.6"/>
<rect x="578.4" y="393.2" width="182.8" height="2.3" fill="#16c416"/>
<rect x="578.4" y="397" width="182.8" height="11.2" fill="#9a3c3c"/>
<rect x="578.4" y="397" width="182.8" height="11.2" fill="url(#rdots)"/>
<path d="M573.4 422.6L761.2 422.6" stroke="#3a3a3a" stroke-width="1" fill="none"/>
<path d="M573.4 436.2L761.2 436.2" stroke="#3a3a3a" stroke-width="1" fill="none"/>
<path d="M573.4 449.4L761.2 449.4" stroke="#3a3a3a" stroke-width="1" fill="none"/>
<path d="M573.4 462.4L761.2 462.4" stroke="#3a3a3a" stroke-width="1" fill="none"/>
<path d="M573.4 475.8L761.2 475.8" stroke="#3a3a3a" stroke-width="1" fill="none"/>
<path d="M573.4 489.2L761.2 489.2" stroke="#3a3a3a" stroke-width="1" fill="none"/>
<rect x="761.2" y="359.8" width="12" height="140.2" fill="#3f3f3f"/>
<path d="M761.2 359.8L761.2 500" stroke="#303030" stroke-width="1" fill="none"/>
<path d="M762.8 382.8H770.6V389.4L766.7 393L762.8 389.4Z" fill="#bdbdbd" stroke="#8a8a8a" stroke-width="0.5"/>
<path d="M761.6 395.4L772.6 395.4" stroke="#2e2e2e" stroke-width="1" fill="none"/>
<rect x="763" y="401.2" width="6.2" height="4.8" fill="none" stroke="#d0d0d0" stroke-width="0.9"/>
<path d="M764.4 401.2Q765 398.6 767.4 398.8Q769.8 399 770 401.8" fill="none" stroke="#d0d0d0" stroke-width="0.9"/>
<rect x="768.6" y="402.6" width="2.2" height="3.4" fill="#d0d0d0"/>
<path d="M761.6 409.2L772.6 409.2" stroke="#2e2e2e" stroke-width="1" fill="none"/>
<path d="M763.6 416L769.8 416L766.7 411.6Z" fill="#686868"/>
<path d="M576.8 411.6H581.2L580.1 413.4V418.2L581.2 420H576.8L577.9 418.2V413.4Z" fill="#f0dede"/>
<path d="M576.8 425H581.2L580.1 426.8V431.6L581.2 433.4H576.8L577.9 431.6V426.8Z" fill="#f0dede"/>
<path d="M576.8 438.4H581.2L580.1 440.2V445L581.2 446.8H576.8L577.9 445V440.2Z" fill="#f0dede"/>
<path d="M579 452.3L582 455.3L579 458.3L576 455.3Z" fill="#d2d2d2" stroke="#2e2e2e" stroke-width="0.5"/>
<path d="M610.8 452.3L613.8 455.3L610.8 458.3L607.8 455.3Z" fill="#d2d2d2" stroke="#2e2e2e" stroke-width="0.5"/>
<path d="M643.3 452.3L646.3 455.3L643.3 458.3L640.3 455.3Z" fill="#d2d2d2" stroke="#2e2e2e" stroke-width="0.5"/>
<path d="M576.6 465.5H581.4L579.9 468.5L581.4 471.5H576.6L578.1 468.5Z" fill="#d2d2d2" stroke="#2e2e2e" stroke-width="0.5"/>
<path d="M624.5 465.5H629.3L627.8 468.5L629.3 471.5H624.5L626 468.5Z" fill="#d2d2d2" stroke="#2e2e2e" stroke-width="0.5"/>
<path d="M656.9 465.5H661.7L660.2 468.5L661.7 471.5H656.9L658.4 468.5Z" fill="#d2d2d2" stroke="#2e2e2e" stroke-width="0.5"/>
<path d="M576.6 478.9H581.4L579.9 481.9L581.4 484.9H576.6L578.1 481.9Z" fill="#d2d2d2" stroke="#2e2e2e" stroke-width="0.5"/>
<path d="M635.4 478.9H640.2L638.7 481.9L640.2 484.9H635.4L636.9 481.9Z" fill="#d2d2d2" stroke="#2e2e2e" stroke-width="0.5"/>
<path d="M667.6 478.9H672.4L670.9 481.9L672.4 484.9H667.6L669.1 481.9Z" fill="#d2d2d2" stroke="#2e2e2e" stroke-width="0.5"/>
<path d="M683.9 478.9H688.7L687.2 481.9L688.7 484.9H683.9L685.4 481.9Z" fill="#d2d2d2" stroke="#2e2e2e" stroke-width="0.5"/>
<path d="M700.1 478.9H704.9L703.4 481.9L704.9 484.9H700.1L701.6 481.9Z" fill="#d2d2d2" stroke="#2e2e2e" stroke-width="0.5"/>
<path d="M716.3 478.9H721.1L719.6 481.9L721.1 484.9H716.3L717.8 481.9Z" fill="#d2d2d2" stroke="#2e2e2e" stroke-width="0.5"/>
<path d="M579.3 381L579.3 500" stroke="#b83232" stroke-width="0.9" fill="none"/>
<path d="M574.6 372.2H583.4V376.2L579 381.2L574.6 376.2Z" fill="#d8b02a" stroke="#6a5410" stroke-width="0.6"/>
<path d="M577 374H581V376L579 378.4L577 376Z" fill="#f0d870"/>
<rect x="774.2" y="345" width="3" height="155" fill="#202020"/>
<path d="M775.7 345L775.7 500" stroke="#0a0a0a" stroke-width="3" fill="none" stroke-dasharray="3.4 1"/>
<rect x="777.2" y="345" width="23" height="155" fill="#414141"/>
<rect x="777.2" y="345" width="23" height="4.6" fill="#303030"/>
<rect x="777.2" y="349.6" width="23" height="11.6" fill="#414141"/>
<rect x="779" y="351.4" width="1" height="1" fill="#2a2a2a"/>
<rect x="780" y="352.4" width="1" height="1" fill="#555555"/>
<rect x="779" y="353.4" width="1" height="1" fill="#2a2a2a"/>
<rect x="780" y="354.4" width="1" height="1" fill="#555555"/>
<rect x="779" y="355.4" width="1" height="1" fill="#2a2a2a"/>
<rect x="780" y="356.4" width="1" height="1" fill="#555555"/>
<rect x="779" y="357.4" width="1" height="1" fill="#2a2a2a"/>
<rect x="780" y="358.4" width="1" height="1" fill="#555555"/>
<rect x="777.8" y="362.6" width="23" height="138" fill="#414141" stroke="#262626" stroke-width="0.9"/>
<path d="M800 369.6H790.6V378.2" fill="none" stroke="#060606" stroke-width="1.7"/>
<path d="M790.6 383.8V394.4M790.6 389.4H800" fill="none" stroke="#060606" stroke-width="1.7"/>
<path d="M790.6 400.6V409.8H800" fill="none" stroke="#060606" stroke-width="1.7"/>
<rect x="785" y="419.2" width="7.2" height="7" fill="#4a4a4a" stroke="#222222" stroke-width="0.9"/>
<path d="M523.7 271.6L523.7 281.4L525.9 279.3L527.6 283.2L529.2 282.5L527.5 278.7L530.8 278.4Z" fill="#ffffff" stroke="#000000" stroke-width="0.5"/>
</svg>
<div id="tx">
<div class="t" style="left:340.6px;top:4.28px;font-size:8px;color:#d0d0d0;">对齐</div>
<div class="t" style="left:614px;top:4.19px;font-size:8.6px;color:#cccccc;">工作区:</div>
<div class="t" style="left:651.6px;top:4.48px;font-size:8px;color:#cfcfcf;">标准</div>
<div class="t b" style="left:759px;top:4.28px;font-size:8px;color:#1e1e1e;">搜索帮助</div>
<div class="t" style="left:1px;top:20.28px;font-size:8px;color:#b2b2b2;">项目</div>
<div class="t" style="left:48.4px;top:20.48px;font-size:7.6px;color:#cecece;">效果控件：（无）</div>
<div class="t" style="left:218.4px;top:20.48px;font-size:7.6px;color:#cecece;">合成：合成 3</div>
<div class="t" style="left:205.6px;top:34.48px;font-size:8px;color:#d4d4d4;">合成 3</div>
<div class="t" style="left:199px;top:48px;font-size:9.8px;color:#c4c4c4;transform-origin:0 0;transform:scale(.5);">0</div>
<div class="t" style="left:232.5px;top:48px;font-size:9.8px;color:#c4c4c4;transform-origin:0 0;transform:scale(.5);">50</div>
<div class="t" style="left:266px;top:48px;font-size:9.8px;color:#c4c4c4;transform-origin:0 0;transform:scale(.5);">100</div>
<div class="t" style="left:299.5px;top:48px;font-size:9.8px;color:#c4c4c4;transform-origin:0 0;transform:scale(.5);">150</div>
<div class="t" style="left:333px;top:48px;font-size:9.8px;color:#c4c4c4;transform-origin:0 0;transform:scale(.5);">200</div>
<div class="t" style="left:366.5px;top:48px;font-size:9.8px;color:#c4c4c4;transform-origin:0 0;transform:scale(.5);">250</div>
<div class="t" style="left:400px;top:48px;font-size:9.8px;color:#c4c4c4;transform-origin:0 0;transform:scale(.5);">300</div>
<div class="t" style="left:433.5px;top:48px;font-size:9.8px;color:#c4c4c4;transform-origin:0 0;transform:scale(.5);">350</div>
<div class="t" style="left:467px;top:48px;font-size:9.8px;color:#c4c4c4;transform-origin:0 0;transform:scale(.5);">400</div>
<div class="t" style="left:500.5px;top:48px;font-size:9.8px;color:#c4c4c4;transform-origin:0 0;transform:scale(.5);">450</div>
<div class="t" style="left:534px;top:48px;font-size:9.8px;color:#c4c4c4;transform-origin:0 0;transform:scale(.5);">500</div>
<div class="t" style="left:567.5px;top:48px;font-size:9.8px;color:#c4c4c4;transform-origin:0 0;transform:scale(.5);">550</div>
<div class="t" style="left:601px;top:48px;font-size:9.8px;color:#c4c4c4;transform-origin:0 0;transform:scale(.5);">600</div>
<div class="t" style="left:634.5px;top:48px;font-size:9.8px;color:#c4c4c4;transform-origin:0 0;transform:scale(.5);">650</div>
<div class="t" style="left:668px;top:48px;font-size:9.8px;color:#c4c4c4;transform-origin:0 0;transform:scale(.5);">700</div>
<div class="t" style="left:701.5px;top:48px;font-size:9.8px;color:#c4c4c4;transform-origin:0 0;transform:scale(.5);">750</div>
<div class="t" style="left:191.6px;top:59.2px;font-size:9.8px;color:#c4c4c4;transform-origin:0 0;transform:rotate(90deg) scale(.5);">50</div>
<div class="t" style="left:191.6px;top:92.7px;font-size:9.8px;color:#c4c4c4;transform-origin:0 0;transform:rotate(90deg) scale(.5);">100</div>
<div class="t" style="left:191.6px;top:126.2px;font-size:9.8px;color:#c4c4c4;transform-origin:0 0;transform:rotate(90deg) scale(.5);">150</div>
<div class="t" style="left:191.6px;top:159.7px;font-size:9.8px;color:#c4c4c4;transform-origin:0 0;transform:rotate(90deg) scale(.5);">200</div>
<div class="t" style="left:191.6px;top:193.2px;font-size:9.8px;color:#c4c4c4;transform-origin:0 0;transform:rotate(90deg) scale(.5);">250</div>
<div class="t" style="left:191.6px;top:226.7px;font-size:9.8px;color:#c4c4c4;transform-origin:0 0;transform:rotate(90deg) scale(.5);">300</div>
<div class="t" style="left:191.6px;top:260.2px;font-size:9.8px;color:#c4c4c4;transform-origin:0 0;transform:rotate(90deg) scale(.5);">350</div>
<div class="t" style="left:191.6px;top:293.7px;font-size:9.8px;color:#c4c4c4;transform-origin:0 0;transform:rotate(90deg) scale(.5);">400</div>
<div class="t" style="left:207.8px;top:331.37px;font-size:7px;color:#b2b2b2;">100%</div>
<div class="t" style="left:284.2px;top:331.37px;font-size:7px;color:#b2b2b2;">0:00:00:00</div>
<div class="t" style="left:374.6px;top:330.88px;font-size:8px;color:#d4d4d4;">完整</div>
<div class="t" style="left:463px;top:330.88px;font-size:8px;color:#d4d4d4;">活动摄像机</div>
<div class="t" style="left:535.4px;top:331.37px;font-size:7px;color:#c4c4c4;">1 ...</div>
<div class="t" style="left:653px;top:331.08px;font-size:7.6px;color:#c99a1e;border-bottom:1px dotted #8a6a14;padding-bottom:0.6px;">+0.0</div>
<div class="t" style="left:745.6px;top:20.08px;font-size:8px;color:#d2d2d2;">信息</div>
<div class="t" style="left:780px;top:20.08px;font-size:8px;color:#b4b4b4;">音频</div>
<div class="t" style="left:745.6px;top:41.08px;font-size:8px;color:#d2d2d2;">预览</div>
<div class="t" style="left:745.4px;top:63.88px;font-size:8px;color:#d2d2d2;">效果和预设</div>
<div class="t" style="left:749px;top:92.68px;font-size:8px;color:#c8c8c8;">* 动画预设</div>
<div class="t" style="left:749px;top:104.08px;font-size:8px;color:#c8c8c8;">3D 通道</div>
<div class="t" style="left:749px;top:115.95px;font-size:7.05px;color:#c8c8c8;">CINEMA 4D</div>
<div class="t" style="left:749px;top:127.17px;font-size:7.4px;color:#c8c8c8;">Magic Bullet Looks</div>
<div class="t" style="left:749px;top:138.57px;font-size:7.4px;color:#c8c8c8;">Magic Bullet MisFire</div>
<div class="t" style="left:749px;top:149.97px;font-size:7.4px;color:#c8c8c8;">Red Giant</div>
<div class="t" style="left:749px;top:161.37px;font-size:7.4px;color:#c8c8c8;">Rowbyte</div>
<div class="t" style="left:749px;top:172.77px;font-size:7.4px;color:#c8c8c8;">Synthetic Aperture</div>
<div class="t" style="left:749px;top:184.17px;font-size:7.4px;color:#c8c8c8;">Trapcode</div>
<div class="t" style="left:749px;top:195.57px;font-size:7.4px;color:#c8c8c8;">Video Copilot</div>
<div class="t" style="left:749px;top:206.68px;font-size:8px;color:#c8c8c8;">实用工具</div>
<div class="t" style="left:749px;top:218.08px;font-size:8px;color:#c8c8c8;">扭曲</div>
<div class="t" style="left:749px;top:229.48px;font-size:8px;color:#c8c8c8;">文本</div>
<div class="t" style="left:749px;top:240.88px;font-size:8px;color:#c8c8c8;">时间</div>
<div class="t" style="left:749px;top:252.28px;font-size:8px;color:#c8c8c8;">杂色和颗粒</div>
<div class="t" style="left:749px;top:263.68px;font-size:8px;color:#c8c8c8;">模拟</div>
<div class="t" style="left:749px;top:275.08px;font-size:8px;color:#c8c8c8;">模糊和锐化</div>
<div class="t" style="left:749px;top:286.48px;font-size:8px;color:#c8c8c8;">生成</div>
<div class="t" style="left:749px;top:297.88px;font-size:8px;color:#c8c8c8;">表达式控制</div>
<div class="t" style="left:749px;top:309.28px;font-size:8px;color:#c8c8c8;">过时</div>
<div class="t" style="left:749px;top:320.68px;font-size:8px;color:#c8c8c8;">过渡</div>
<div class="t" style="left:0.4px;top:348.68px;font-size:8px;color:#b0b0b0;margin-left:-1.4px;">渲染队列</div>
<div class="t" style="left:61.2px;top:348.68px;font-size:8px;color:#b0b0b0;">合成 1</div>
<div class="t" style="left:113.8px;top:348.68px;font-size:8px;color:#d6d6d6;">合成 3</div>
<div class="t" style="left:-2.2px;top:360.72px;font-size:11.6px;color:#c9a227;font-weight:bold;letter-spacing:0.15px;">0:00:00:00</div>
<div class="t" style="left:1.4px;top:374.17px;font-size:6.6px;color:#b8901e;">00000 (25.00 fps)</div>
<div class="t" style="left:63.8px;top:385.68px;font-size:7.6px;color:#8e8e8e;">#</div>
<div class="t" style="left:86px;top:385.48px;font-size:8px;color:#b4b4b4;">源名称</div>
<div class="t" style="left:401px;top:385.48px;font-size:8px;color:#d0d0d0;font-style:italic;font-family:'Liberation Serif',serif;">fx</div>
<div class="t" style="left:488px;top:385.48px;font-size:8px;color:#b4b4b4;">父级</div>
<div class="t" style="left:64.8px;top:399.58px;font-size:8px;color:#d8d8d8;font-weight:bold;">1</div>
<div class="t b" style="left:98.8px;top:399.38px;font-size:8.4px;color:#f0f0f0;word-spacing:-0.6px;">红色 纯色 3</div>
<div class="t" style="left:505px;top:399.58px;font-size:8px;color:#d0d0d0;">无</div>
<div class="t" style="left:69px;top:412.98px;font-size:8px;color:#c8c8c8;">蒙版</div>
<div class="t" style="left:93px;top:426.38px;font-size:8px;color:#c8c8c8;">蒙版 1</div>
<div class="t" style="left:375px;top:426.38px;font-size:8px;color:#d4d4d4;">相加</div>
<div class="t" style="left:438.8px;top:426.38px;font-size:8px;color:#c8c8c8;">反转</div>
<div class="t" style="left:106px;top:439.78px;font-size:8px;color:#c8c8c8;">蒙版路径</div>
<div class="t u" style="left:369.8px;top:439.78px;font-size:8px;color:#c99a1e;">形状...</div>
<div class="t ul" style="left:106px;top:452.88px;font-size:8px;color:#c8c8c8;">位置</div>
<div class="t u" style="left:369.8px;top:453.12px;font-size:7.5px;color:#c99a1e;">372.0,243.0</div>
<div class="t" style="left:106px;top:466.08px;font-size:8px;color:#c8c8c8;">缩放</div>
<div class="t u" style="left:381.8px;top:466.32px;font-size:7.5px;color:#c99a1e;">0.0,0.0%</div>
<div class="t" style="left:106px;top:479.48px;font-size:8px;color:#c8c8c8;">旋转</div>
<div class="t u" style="left:369.8px;top:479.72px;font-size:7.5px;color:#c99a1e;">0x+113.0°</div>
<div class="t" style="left:585px;top:371.97px;font-size:7px;color:#c8c8c8;">s</div>
<div class="t" style="left:707.6px;top:371.37px;font-size:6.6px;color:#c8c8c8;">01s</div>
<div class="t" style="left:783.8px;top:351.58px;font-size:8.2px;color:#d2d2d2;">移动</div>
<div class="t" style="left:797px;top:419.08px;font-size:8px;color:#c8c8c8;">忽</div>
</div>
</div></body></html>
